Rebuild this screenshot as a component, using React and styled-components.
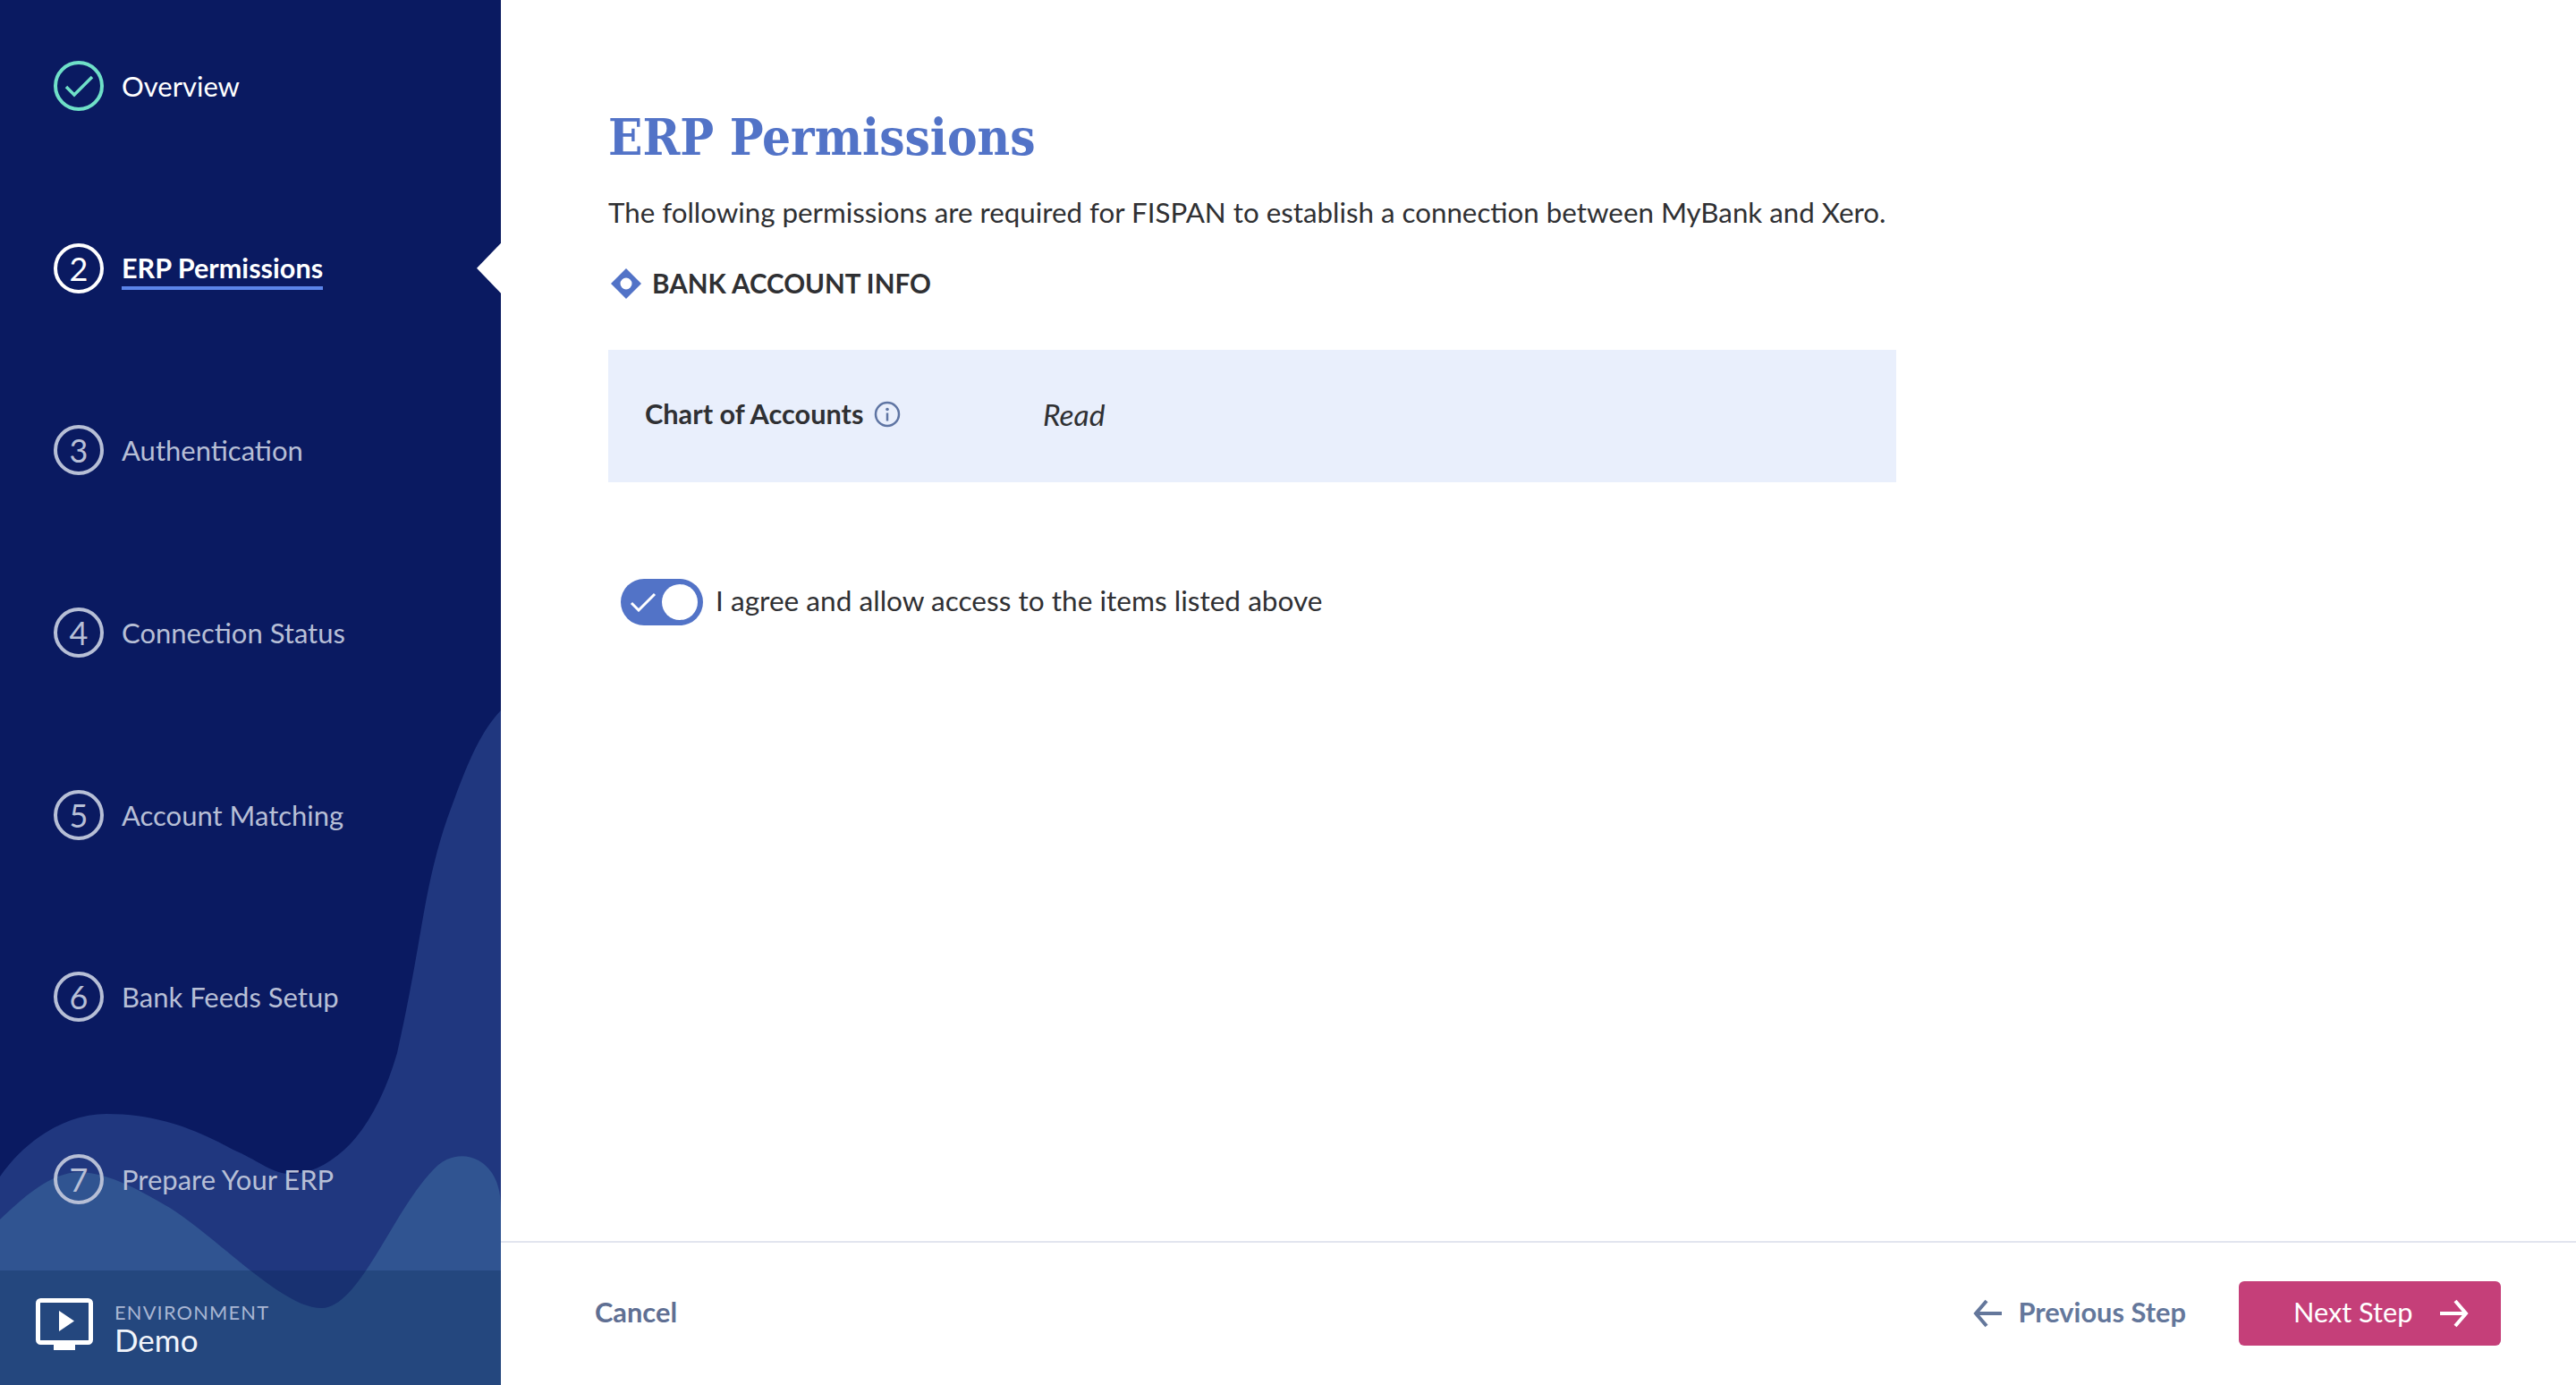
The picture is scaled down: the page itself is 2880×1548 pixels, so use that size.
import React from 'react'
import styled, { createGlobalStyle } from 'styled-components'

const STEPS = [
  { mark: 'check', label: 'Overview', state: 'done' },
  { mark: '2', label: 'ERP Permissions', state: 'active' },
  { mark: '3', label: 'Authentication' },
  { mark: '4', label: 'Connection Status' },
  { mark: '5', label: 'Account Matching' },
  { mark: '6', label: 'Bank Feeds Setup' },
  { mark: '7', label: 'Prepare Your ERP' },
]

const App = () => (
  <Page>
    <GlobalStyle />
    <Sidebar>
      <Waves viewBox="0 0 560 1548" preserveAspectRatio="none" aria-hidden="true">
        <path
          fill="#20377f"
          d="M560 794C535 820 520 860 500 915C488 950 480 985 473 1025C466 1065 458 1115 444 1177C430 1225 410 1262 385 1285C365 1303 345 1312 325 1312C305 1312 290 1298 265 1287C235 1272 190 1245 119 1245C75 1245 30 1272 0 1315V1548H560Z"
        />
        <path
          fill="#305491"
          d="M0 1363C25 1340 55 1310 90 1310C125 1312 155 1330 190 1350C225 1372 270 1415 310 1442C330 1455 345 1462 360 1462C380 1462 400 1435 417 1408C440 1372 462 1328 490 1302C505 1290 522 1290 535 1297C552 1307 560 1325 560 1350V1548H0Z"
        />
      </Waves>
      <StepList>
        {STEPS.map((step) => (
          <Step key={step.label} $active={step.state === 'active'}>
            <StepCircle $state={step.state}>
              {step.mark === 'check' ? (
                <svg width="33" height="25" viewBox="0 0 33 25" fill="none">
                  <path d="M2 13L11 22L31 2" stroke="#6fe0c8" strokeWidth="3.5" />
                </svg>
              ) : (
                step.mark
              )}
            </StepCircle>
            <StepLabel $state={step.state}>{step.label}</StepLabel>
          </Step>
        ))}
      </StepList>
      <EnvBar>
        <svg width="64" height="58" viewBox="0 0 64 58" fill="none">
          <rect x="2.5" y="2.5" width="59" height="47" rx="3" stroke="#fff" strokeWidth="5" />
          <rect x="20" y="50" width="24" height="8" fill="#fff" />
          <path d="M26 14L43 25.5L26 37Z" fill="#fff" />
        </svg>
        <EnvText>
          <EnvLabel>ENVIRONMENT</EnvLabel>
          <EnvValue>Demo</EnvValue>
        </EnvText>
      </EnvBar>
    </Sidebar>
    <Main>
      <Content>
        <Title>ERP Permissions</Title>
        <Intro>
          The following permissions are required for FISPAN to establish a connection between MyBank and Xero.
        </Intro>
        <SectionHead>
          <svg width="34" height="34" viewBox="0 0 34 34">
            <path
              fillRule="evenodd"
              fill="#5273c7"
              d="M17 0L34 17L17 34L0 17ZM17 10.5A6.5 6.5 0 1 0 17 23.5A6.5 6.5 0 1 0 17 10.5Z"
            />
          </svg>
          BANK ACCOUNT INFO
        </SectionHead>
        <PermissionRow>
          <PermissionName>
            Chart of Accounts
            <svg width="30" height="30" viewBox="0 0 30 30" fill="none">
              <circle cx="15" cy="15" r="13" stroke="#5f75a3" strokeWidth="2.5" />
              <circle cx="15" cy="9.5" r="1.8" fill="#5f75a3" />
              <path d="M15 13.5V22.5" stroke="#5f75a3" strokeWidth="2.5" />
            </svg>
          </PermissionName>
          <PermissionLevel>Read</PermissionLevel>
        </PermissionRow>
        <Agree>
          <Toggle>
            <svg width="30" height="22" viewBox="0 0 30 22" fill="none">
              <path d="M2 12L10 20L28 2" stroke="#fff" strokeWidth="3" />
            </svg>
            <Knob />
          </Toggle>
          <AgreeText>I agree and allow access to the items listed above</AgreeText>
        </Agree>
      </Content>
      <Footer>
        <CancelLink>Cancel</CancelLink>
        <FooterRight>
          <BackLink>
            <svg width="32" height="32" viewBox="0 0 32 32" fill="none">
              <path d="M32 16H3M15 2L3 16L15 30" stroke="#64779b" strokeWidth="4" />
            </svg>
            <span>Previous Step</span>
          </BackLink>
          <NextButton>
            <span>Next Step</span>
            <svg width="32" height="32" viewBox="0 0 32 32" fill="none">
              <path d="M0 16H29M17 2L29 16L17 30" stroke="#fff" strokeWidth="4" />
            </svg>
          </NextButton>
        </FooterRight>
      </Footer>
    </Main>
  </Page>
)

const GlobalStyle = createGlobalStyle`
  html, body {
    margin: 0;
    padding: 0;
    background: #fff;
  }
  body {
    font-family: Lato, "Open Sans", sans-serif;
    color: #2f3033;
  }
`

const Page = styled.div`
  display: flex;
  width: 100%;
  height: 100vh;
  overflow: hidden;
`

const Sidebar = styled.aside`
  position: relative;
  display: flex;
  flex-direction: column;
  justify-content: space-between;
  width: 560px;
  flex-shrink: 0;
  background: #0a1a61;
`

const Waves = styled.svg`
  position: absolute;
  inset: 0;
  width: 100%;
  height: 100%;
`

const StepList = styled.ol`
  position: relative;
  display: flex;
  flex-direction: column;
  gap: 147.7px;
  margin: 0;
  padding: 68px 0 0 60px;
  list-style: none;
`

const Step = styled.li`
  position: relative;
  display: flex;
  align-items: center;
  gap: 20px;
  height: 56px;

  ${(p) =>
    p.$active &&
    `
    &::after {
      content: '';
      position: absolute;
      right: 0;
      top: 0;
      width: 27px;
      height: 56px;
      background: #fff;
      clip-path: polygon(100% 0, 0 50%, 100% 100%);
    }
  `}
`

const StepCircle = styled.span`
  display: flex;
  align-items: center;
  justify-content: center;
  box-sizing: border-box;
  width: 56px;
  height: 56px;
  border-radius: 50%;
  border: 4px solid
    ${(p) =>
      p.$state === 'done' ? '#6fe0c8' : p.$state === 'active' ? '#fff' : '#b7bfd6'};
  font-size: 36px;
  color: ${(p) => (p.$state === 'active' ? '#fff' : '#b7bfd6')};
`

const StepLabel = styled.span`
  font-size: ${(p) => (p.$state === 'active' ? '30.6px' : '31px')};
  line-height: 40px;
  color: ${(p) => (p.$state ? '#fff' : '#b7bfd6')};
  font-weight: ${(p) => (p.$state === 'active' ? 700 : 400)};
  ${(p) => p.$state === 'active' && 'box-shadow: 0 4px 0 #5b85ea;'}
`

const EnvBar = styled.div`
  position: relative;
  display: flex;
  align-items: center;
  gap: 24px;
  height: 128px;
  padding: 0 0 8px 40px;
  box-sizing: border-box;
  background: rgba(0, 30, 70, 0.25);
`

const EnvText = styled.div`
  display: flex;
  flex-direction: column;
  padding-top: 6px;
`

const EnvLabel = styled.span`
  font-size: 21.8px;
  line-height: 28px;
  letter-spacing: 1.2px;
  color: #a9b6d3;
`

const EnvValue = styled.span`
  font-size: 35px;
  line-height: 32px;
  color: #f2f5fb;
`

const Main = styled.main`
  flex: 1;
  display: flex;
  flex-direction: column;
  min-width: 0;
`

const Content = styled.div`
  flex: 1;
  padding: 115px 0 0 120px;
`

const Title = styled.h1`
  margin: 0;
  font-family: "DejaVu Serif Condensed", "DejaVu Serif", serif;
  font-stretch: condensed;
  font-size: 56px;
  line-height: 76px;
  font-weight: 700;
  color: #5273c7;
`

const Intro = styled.p`
  margin: 26px 0 0;
  font-size: 31.3px;
  line-height: 40px;
`

const SectionHead = styled.div`
  display: flex;
  align-items: center;
  gap: 12px;
  margin: 40px 0 0 3px;
  font-size: 29.6px;
  line-height: 40px;
  font-weight: 700;
`

const PermissionRow = styled.div`
  display: flex;
  width: 1440px;
  height: 148px;
  margin-top: 54px;
  padding: 0 0 5px 41px;
  box-sizing: border-box;
  align-items: center;
  background: #e9effc;
`

const PermissionName = styled.div`
  display: flex;
  align-items: center;
  gap: 12px;
  width: 445px;
  font-size: 30.7px;
  font-weight: 700;
`

const PermissionLevel = styled.div`
  font-size: 33.5px;
  font-style: italic;
`

const Agree = styled.div`
  display: flex;
  align-items: center;
  gap: 14px;
  margin: 106px 0 0 14px;
  font-size: 31.6px;
  line-height: 52px;
`

const AgreeText = styled.span`
  padding-bottom: 3px;
`

const Toggle = styled.span`
  display: flex;
  align-items: center;
  justify-content: space-between;
  width: 92px;
  height: 52px;
  box-sizing: border-box;
  padding: 0 6px 0 10px;
  border-radius: 26px;
  background: #5273c7;
`

const Knob = styled.span`
  width: 40px;
  height: 40px;
  border-radius: 50%;
  background: #fff;
`

const Footer = styled.footer`
  display: flex;
  align-items: center;
  justify-content: space-between;
  height: 161px;
  box-sizing: border-box;
  padding: 0 84px 1px 105px;
  border-top: 2px solid #e2e5ef;
`

const CancelLink = styled.a`
  padding-bottom: 4px;
  font-size: 30.8px;
  font-weight: 700;
  color: #5f6f93;
`

const FooterRight = styled.div`
  display: flex;
  align-items: center;
  gap: 59px;
`

const BackLink = styled.a`
  display: flex;
  align-items: center;
  gap: 18px;
  font-size: 30.8px;
  font-weight: 700;
  color: #64779b;

  span {
    padding-bottom: 3px;
  }
`

const NextButton = styled.button`
  display: flex;
  align-items: center;
  gap: 31px;
  width: 293px;
  height: 72px;
  padding: 0 0 0 61px;
  border: 0;
  border-radius: 6px;
  background: #c53f79;
  color: #fff;
  font-family: inherit;
  font-size: 30.7px;

  span {
    padding-bottom: 3px;
  }
`

export default App
